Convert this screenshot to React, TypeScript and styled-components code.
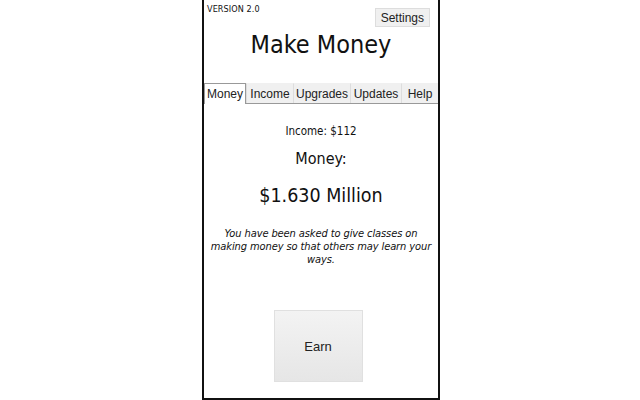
import React from 'react'
import styled, { createGlobalStyle } from 'styled-components'

const GlobalStyle = createGlobalStyle`
  html, body {
    margin: 0;
    padding: 0;
    background: #fff;
  }
`

const Page = styled.div`
  width: 640px;
  height: 400px;
  display: flex;
  justify-content: center;
`

const Frame = styled.div`
  width: 234px;
  height: 398px;
  margin-left: 2px;
  border: 2px solid #111;
  border-top: none;
  display: flex;
  flex-direction: column;
  font-family: 'DejaVu Sans Condensed', 'DejaVu Sans', sans-serif;
  color: #111;
`

const Header = styled.div`
  display: flex;
  justify-content: space-between;
  align-items: flex-start;
  padding: 4px 8px 0 3px;
`

const Version = styled.span`
  font-size: 9px;
  letter-spacing: 0.1px;
`

const SettingsButton = styled.button`
  margin-top: 4px;
  height: 19px;
  padding: 0 5px;
  border: 1px solid #ddd;
  background: #f0f0f0;
  font-family: 'Liberation Sans', Arial, sans-serif;
  font-size: 12px;
  color: #222;
`

const Title = styled.h1`
  margin: 3px 0 0;
  text-align: center;
  font-weight: normal;
  font-size: 25px;
  height: 53px;
`

const TabBar = styled.div`
  display: flex;
  border-bottom: 1px solid #999;
  height: 20px;
`

const Tab = styled.div<{ $active?: boolean; $width: number }>`
  width: ${p => p.$width}px;
  flex: none;
  display: flex;
  align-items: center;
  justify-content: center;
  font-family: 'Liberation Sans', Arial, sans-serif;
  font-size: 12px;
  color: #222;
  box-sizing: border-box;
  background: ${p => (p.$active ? '#fff' : '#f0f0f0')};
  border-left: 1px solid ${p => (p.$active ? '#999' : '#ddd')};
  border-top: 1px solid ${p => (p.$active ? '#999' : '#f0f0f0')};
  border-right: ${p => (p.$active ? '1px solid #999' : 'none')};
  margin-bottom: ${p => (p.$active ? '-1px' : '0')};
  height: ${p => (p.$active ? '21px' : '20px')};
`

const Content = styled.div`
  flex: 1;
  display: flex;
  flex-direction: column;
  align-items: center;
  text-align: center;
`

const Income = styled.div`
  margin-top: 20px;
  font-size: 11.5px;
`

const MoneyLabel = styled.div`
  margin-top: 11px;
  font-size: 16px;
`

const MoneyValue = styled.div`
  margin-top: 16px;
  font-size: 19.5px;
`

const Flavor = styled.p`
  margin: 20px 5px 0;
  font-size: 11px;
  letter-spacing: -0.1px;
  font-style: italic;
  line-height: 13px;
`

const EarnButton = styled.button`
  margin: 44px 6px 0 0;
  width: 89px;
  height: 72px;
  border: 1px solid #e0e0e0;
  background: linear-gradient(#f3f3f3, #e6e6e6);
  font-family: 'Liberation Sans', Arial, sans-serif;
  font-size: 13px;
  color: #222;
`

const tabs = [
  { label: 'Money', w: 42 },
  { label: 'Income', w: 47 },
  { label: 'Upgrades', w: 57 },
  { label: 'Updates', w: 51 },
  { label: 'Help', w: 37 },
]

export default function App() {
  return (
    <>
      <GlobalStyle />
      <Page>
        <Frame>
          <Header>
            <Version>VERSION 2.0</Version>
            <SettingsButton>Settings</SettingsButton>
          </Header>
          <Title>Make Money</Title>
          <TabBar>
            {tabs.map((t, i) => (
              <Tab key={t.label} $active={i === 0} $width={t.w}>
                {t.label}
              </Tab>
            ))}
          </TabBar>
          <Content>
            <Income>Income: $112</Income>
            <MoneyLabel>Money:</MoneyLabel>
            <MoneyValue>$1.630 Million</MoneyValue>
            <Flavor>
              You have been asked to give classes on making money so that others may learn your
              ways.
            </Flavor>
            <EarnButton>Earn</EarnButton>
          </Content>
        </Frame>
      </Page>
    </>
  )
}
